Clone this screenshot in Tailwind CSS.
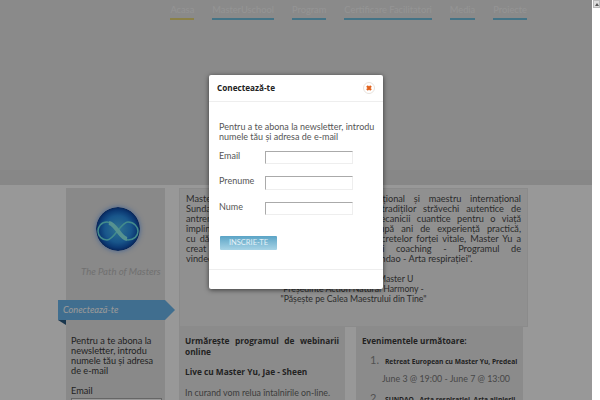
<!DOCTYPE html>
<html lang="ro">
<head>
    <meta charset="UTF-8">
    <title>Conecteaza-te</title>
    <script src="https://cdn.jsdelivr.net/npm/@tailwindcss/browser@4"></script>
</head>
<body class="w-[600px] h-[400px] overflow-hidden relative bg-white font-['Lato',sans-serif] text-[#3a3a3a]">

    <!-- pagina -->
    <div class="w-[592px] h-[400px] overflow-hidden flex flex-col">
        <header class="h-[185px] shrink-0 bg-[#e6e6e6] border-b-[15px] border-[#e1e1e1] pt-[2px]">
            <nav class="flex justify-end gap-[18px] pr-[65px] text-[9.3px] text-[#fff]/70">
                <a class="h-[18px] leading-[15px] border-b-2 border-[#e8d878]">Acasa</a>
                <a class="h-[18px] leading-[15px] border-b-2 border-[#72c0e0]">MasterUschool</a>
                <a class="h-[18px] leading-[15px] border-b-2 border-[#72c0e0]">Program</a>
                <a class="h-[18px] leading-[15px] border-b-2 border-[#72c0e0]">Certificare Facilitatori</a>
                <a class="h-[18px] leading-[15px] border-b-2 border-[#72c0e0]">Media</a>
                <a class="h-[18px] leading-[15px] border-b-2 border-[#72c0e0]">Proiecte</a>
            </nav>
        </header>

        <main class="flex-1 bg-[#fdfdfd] flex pl-[66px] pt-[3px] gap-[14px]">
            <!-- coloana stanga -->
            <aside class="relative w-[99px] h-[220px] bg-[#e4e4e4] shrink-0">
                <div class="flex justify-center pt-[19px] pl-[5px]">
                    <svg width="44" height="44" viewBox="0 0 44 44" class="rounded-full shadow-[0_0_5px_rgba(60,140,255,0.7)]">
                        <defs>
                            <radialGradient id="sfera" cx="50%" cy="50%" r="50%">
                                <stop offset="0" stop-color="#50c0f0"/>
                                <stop offset="0.6" stop-color="#2a90e8"/>
                                <stop offset="0.85" stop-color="#1460c0"/>
                                <stop offset="1" stop-color="#0c3c90"/>
                            </radialGradient>
                        </defs>
                        <circle cx="22" cy="22" r="22" fill="url(#sfera)"/>
                        <path d="M11 15C5 15 2 20 2 24C2 29 6 33 11 33C18 33 25 15 32 15C38 15 42 20 42 24C42 29 38 33 32 33C25 33 18 15 11 15Z" fill="none" stroke="#70e8e8" stroke-width="1.5"/>
                        <path d="M13 16C20 17 24 31 31 32" fill="none" stroke="#90f4f0" stroke-width="4"/>
                    </svg>
                </div>
                <p class="pl-[15px] italic text-[9.6px] leading-[12px] text-[#bbb] mt-[15px] whitespace-nowrap">The Path of Masters</p>

                <div class="mt-[22px] ml-[5px] text-[9.2px] leading-[10px] w-[90px] pt-[36px]">
                    <p>Pentru a te abona la newsletter, introdu numele tău și adresa de e-mail</p>
                    <p class="mt-[10px]">Email</p>
                    <input class="block mt-[2px] w-[91px] h-[13px] border border-[#aaa] bg-white">
                </div>

                <!-- panglica -->
                <div class="absolute left-[-8px] top-[112px] w-[107px] h-[20px] bg-[#6bb8ee] pl-[5px] italic text-[9.2px] leading-[20px] text-white">Conectează-te</div>
                <div class="absolute left-[99px] top-[112px] w-0 h-0 border-y-[10px] border-y-transparent border-l-[10px] border-l-[#6bb8ee]"></div>
                <div class="absolute left-[-8px] top-[132px] w-0 h-0 border-t-[5px] border-t-[#2a5a80] border-l-[8px] border-l-transparent"></div>
            </aside>

            <section class="flex flex-col w-[349px] shrink-0">
                <div class="h-[139px] bg-[#f0f0f0] border border-[#e8e8e8] px-[6px] pt-[5px] text-[9.2px] leading-[10px] text-[#4a4a4a]">
                    <div class="[text-align-last:justify]">Master Yu, Jae-Sheen este trainer internațional și maestru internațional</div>
                    <div class="[text-align-last:justify]">Sundao, moștenitor al unei linii directe a tradiților străvechi autentice de</div>
                    <div class="[text-align-last:justify]">antrenament, îmbinând știința minții și a mecanicii cuantice pentru o viață</div>
                    <div class="[text-align-last:justify]">împlinită, sănătoasă și plină de bucurie. După ani de experiență practică,</div>
                    <div class="[text-align-last:justify]">cu dăruire și studiu, a descoperit multe din secretelor forței vitale, Master Yu a</div>
                    <div class="[text-align-last:justify]">creat metoda de vindecare integrală și coaching - Programul de</div>
                    <div>vindecare și armonizare a corpului și spiritului Sundao - Arta respirației".</div>
                    <div class="text-center mt-[10px] text-[8.7px]">Maestru internațional Master U</div>
                    <div class="text-center text-[8.7px]">Președinte Action Natural Harmony -</div>
                    <div class="text-center text-[8.7px]">"Pășește pe Calea Maestrului din Tine"</div>
                </div>
                <div class="flex gap-[11px] -mt-[1px]">
                    <div class="w-[166px] h-[80px] bg-[#e8e8e8] px-[6px] pt-[9px] text-[8.3px] leading-[11px] font-['Open_Sans',sans-serif]">
                        <p class="font-bold [text-align-last:justify]">Urmărește programul de webinarii</p>
                        <p class="font-bold">online</p>
                        <p class="font-bold mt-[9px]">Live cu Master Yu, Jae - Sheen</p>
                        <p class="mt-[10px] font-['Lato',sans-serif] text-[8.8px] text-[#666] whitespace-nowrap">In curand vom relua întalnirile on-line.</p>
                    </div>
                    <div class="w-[167px] h-[80px] bg-[#e8e8e8] px-[6px] pt-[9px] text-[8.2px] leading-[11px] font-['Open_Sans',sans-serif]">
                        <p class="font-bold">Evenimentele următoare:</p>
                        <div class="flex items-baseline mt-[8px] pl-[8px] gap-[6px]">
                            <span class="text-[11px] text-[#888] font-['Lato',sans-serif]">1.</span>
                            <span class="font-bold text-[6.65px] whitespace-nowrap">Retreat European cu Master Yu, Predeal</span>
                        </div>
                        <p class="pl-[20px] mt-[6px] font-['Lato',sans-serif] text-[8.85px] text-[#777] whitespace-nowrap">June 3 @ 19:00 - June 7 @ 13:00</p>
                        <div class="flex items-baseline mt-[8px] pl-[8px] gap-[6px]">
                            <span class="text-[11px] text-[#888] font-['Lato',sans-serif]">2.</span>
                            <span class="font-bold text-[6.65px] whitespace-nowrap">SUNDAO - Arta respirației, Arta alinierii</span>
                        </div>
                    </div>
                </div>
            </section>
        </main>
    </div>

    <!-- overlay -->
    <div class="absolute left-0 top-0 w-[592px] h-[400px] bg-black/40"></div>

    <!-- buton scrollbar -->
    <div class="absolute left-[593px] top-0 w-[7px] h-[8px] bg-[#ddd] border border-[#bbb] flex items-center justify-center">
        <div class="w-0 h-0 border-x-[2px] border-x-transparent border-b-[3px] border-b-[#555]"></div>
    </div>

    <!-- modal -->
    <div class="absolute left-[209px] top-[75px] w-[174px] h-[214px] bg-white rounded-[2px] shadow-[0_1px_5px_rgba(0,0,0,0.6)] flex flex-col">
        <div class="h-[27px] shrink-0 border-b border-[#eee] flex items-center justify-between pl-[8px] pr-[8px] font-['Open_Sans',sans-serif]">
            <h3 class="font-bold text-[8.2px] text-[#222]">Conectează-te</h3>
            <svg width="12" height="12" viewBox="0 0 12 12">
                <circle cx="6" cy="6" r="5.5" fill="#fff" stroke="#e8e2dc"/>
                <path d="M4 4L8 8M8 4L4 8" stroke="#e2621c" stroke-width="2.4"/>
            </svg>
        </div>
        <div class="flex-1 pl-[10px] pt-[20px] text-[9px] leading-[10px] text-[#555]">
            <p class="whitespace-nowrap">Pentru a te abona la newsletter, introdu</p>
            <p>numele tău și adresa de e-mail</p>
            <div class="flex mt-[9px]"><label class="w-[46px]">Email</label><input class="w-[88px] h-[13px] border border-[#aaa] border-b-[#eee] border-r-[#eee]"></div>
            <div class="flex mt-[12px]"><label class="w-[46px]">Prenume</label><input class="w-[88px] h-[14px] border border-[#aaa] border-b-[#eee] border-r-[#eee]"></div>
            <div class="flex mt-[12px]"><label class="w-[46px]">Nume</label><input class="w-[88px] h-[13px] border border-[#aaa] border-b-[#eee] border-r-[#eee]"></div>
            <button class="block mt-[21px] ml-[1px] w-[57px] h-[14px] bg-gradient-to-b from-[#5aa4c6] to-[#a8d4e6] text-white/80 text-[7.5px] leading-[14px] rounded-[1px]">INSCRIE-TE</button>
        </div>
        <div class="h-[20px] shrink-0 border-t border-[#eee]"></div>
    </div>
</body>
</html>
